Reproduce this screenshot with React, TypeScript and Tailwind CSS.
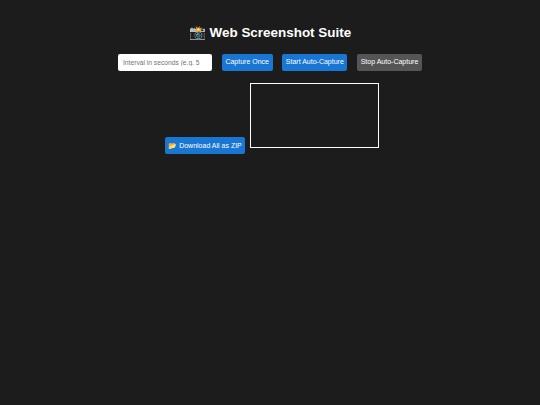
export default function App() {
  return (
    <div className="min-h-[405px] bg-[#1c1c1c] text-white antialiased font-['Liberation_Sans',Arial,sans-serif] flex flex-col items-center pt-[24px]">
      <h1 className="text-[13.45px] leading-[18px] font-bold">📸 Web Screenshot Suite</h1>

      <div className="mt-[12px] flex items-center gap-[9.67px]">
        <input
          placeholder="Interval in seconds (e.g. 5"
          className="w-[94px] h-[17px] px-[5px] bg-white rounded-[2px] text-[6.7px] text-black placeholder:text-[#757575] outline-none"
        />
        <button className="h-[17px] w-[51px] bg-[#1976d2] rounded-[2px] text-[7px] whitespace-nowrap">Capture Once</button>
        <button className="h-[17px] w-[65px] bg-[#1976d2] rounded-[2px] text-[7px] whitespace-nowrap">Start Auto-Capture</button>
        <button className="h-[17px] w-[65px] bg-[#555555] rounded-[2px] text-[7px] whitespace-nowrap">Stop Auto-Capture</button>
      </div>

      <div className="mt-[12px] pl-[4px] flex items-end gap-[5px]">
        <button className="h-[17px] w-[80px] pt-[1px] bg-[#1976d2] rounded-[2px] text-[7px] whitespace-nowrap">📂 Download All as ZIP</button>
        <div className="w-[129px] h-[65px] mb-[6px] border border-white" />
      </div>
    </div>
  )
}
